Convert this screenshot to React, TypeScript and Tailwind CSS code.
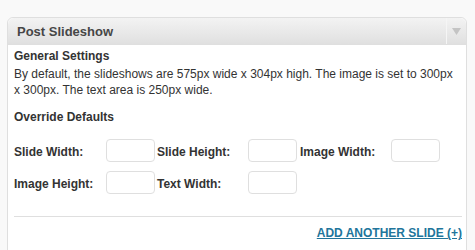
const ROWS = [
  ['Slide Width:', 'Slide Height:', 'Image Width:'],
  ['Image Height:', 'Text Width:'],
];

function SizeInput() {
  return (
    <input
      type="text"
      className="w-[49px] h-[23px] rounded-[4px] border border-[#dfdfdf] bg-white outline-none"
    />
  );
}

export default function App() {
  return (
    <div className="w-[475px] h-[250px] overflow-hidden bg-[#f9f9f9] pt-[17px] pl-[7px] font-['Liberation_Sans',Arial,sans-serif] text-[#333]">
      <div className="w-[460px] h-[260px] rounded-t-[6px] border border-[#dfdfdf] bg-white">
        <div className="flex h-[27px] rounded-t-[6px] border-b border-[#dfdfdf] bg-gradient-to-b from-[#f3f3f3] to-[#e0e0e0]">
          <h3 className="flex-1 pl-[9px] pt-[6px] text-[13px] font-bold leading-[16px] text-[#464646]">
            Post Slideshow
          </h3>
          <div className="flex w-[20px] items-center justify-center border-l border-[#f5f5f5]">
            <svg width="9" height="7" viewBox="0 0 9 7">
              <path d="M0 0 H9 L4.5 7 Z" fill="#c4c4c4" />
            </svg>
          </div>
        </div>

        <div className="pl-[6px] pr-[4px] pt-[3px]">
          <h4 className="text-[12px] font-bold leading-[16px]">General Settings</h4>
          <p className="mt-[2px] text-[12px] leading-[16px]">
            By default, the slideshows are 575px wide x 304px high. The image is set to 300px x 300px. The text area is 250px wide.
          </p>

          <h4 className="mt-[11px] text-[12px] font-bold leading-[16px]">Override Defaults</h4>

          <div className="mt-[14px] flex flex-col gap-[9px]">
            {ROWS.map((row, i) => (
              <div key={i} className="flex items-center">
                {row.map((label, j) => (
                  <div key={label} className={`flex items-center ${j === 1 ? 'ml-[2px]' : j === 2 ? 'ml-[3px]' : ''}`}>
                    <span className={`${j === 0 ? 'w-[92px]' : 'w-[91px]'} pt-[2px] text-[12px] font-bold leading-[16px]`}>{label}</span>
                    <SizeInput />
                  </div>
                ))}
              </div>
            ))}
          </div>

          <div className="mt-[22px] border-t border-[#dfdfdf] pt-[8px] text-right text-[12px] leading-[16px]">
            <a href="#" className="font-bold uppercase text-[#21759b] underline">
              Add another slide (+)
            </a>
          </div>
        </div>
      </div>
    </div>
  );
}
